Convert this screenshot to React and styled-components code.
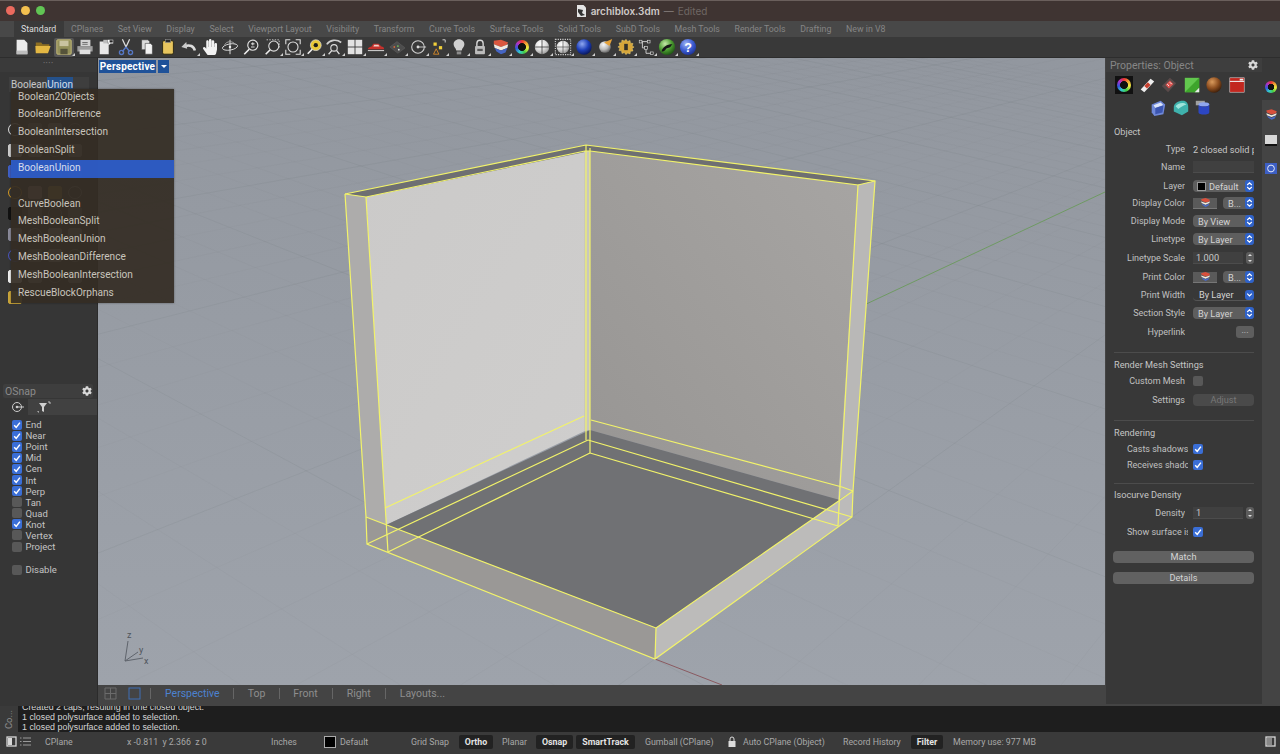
import React from 'react'
import styled, { createGlobalStyle } from 'styled-components'
import { FaCog, FaHandPaper } from 'react-icons/fa'

const GlobalStyle = createGlobalStyle`
    html, body {
        margin: 0;
        padding: 0;
        background: #2a2a2a;
    }
    * {
        box-sizing: border-box;
    }
`

const TABS = ['Standard', 'CPlanes', 'Set View', 'Display', 'Select', 'Viewport Layout', 'Visibility', 'Transform', 'Curve Tools', 'Surface Tools', 'Solid Tools', 'SubD Tools', 'Mesh Tools', 'Render Tools', 'Drafting', 'New in V8']

const MENU = ['Boolean2Objects', 'BooleanDifference', 'BooleanIntersection', 'BooleanSplit', 'BooleanUnion', '', 'CurveBoolean', 'MeshBooleanSplit', 'MeshBooleanUnion', 'MeshBooleanDifference', 'MeshBooleanIntersection', 'RescueBlockOrphans']

const SNAPS = [['End', 1], ['Near', 1], ['Point', 1], ['Mid', 1], ['Cen', 1], ['Int', 1], ['Perp', 1], ['Tan', 0], ['Quad', 0], ['Knot', 1], ['Vertex', 0], ['Project', 0]]

function CheckBox({ on }) {
    return (
        <Check $on={on}>
            {on && (
                <svg width="10" height="10" viewBox="0 0 10 10">
                    <path d="M2.2 5.2 4.2 7.4 7.9 2.6" fill="none" stroke="#fff" strokeWidth="1.5" />
                </svg>
            )}
        </Check>
    )
}

function Stepper({ square }) {
    return (
        <StepBlue $square={square}>
            <svg width="7" height="10" viewBox="0 0 7 10">
                {!square && <path d="M1.2 4 3.5 1.8 5.8 4" fill="none" stroke="#fff" strokeWidth="1.1" />}
                <path d={square ? 'M1.2 3.6 3.5 6 5.8 3.6' : 'M1.2 6 3.5 8.2 5.8 6'} fill="none" stroke="#fff" strokeWidth="1.1" />
            </svg>
        </StepBlue>
    )
}

function LayerGlyph({ size = 16 }) {
    return (
        <svg width={size} height={size} viewBox="0 0 20 20">
            <path d="M2 4 10 2l8 3-1 3-7 2-7-3z" fill="#d8503c" />
            <path d="M2 8l8 3 8-3-1 3-7 3-7-3z" fill="#efe9e0" />
            <path d="M3 12l7 3 7-3-2 4-5 2-5-3z" fill="#4a69c2" />
        </svg>
    )
}

function Sym({ children, size = 20, fly }) {
    return (
        <SymBox $size={size} $fly={fly}>
            <svg width={size} height={size} viewBox="0 0 20 20">{children}</svg>
        </SymBox>
    )
}

function Ball({ id, a, b, c, r = 8 }) {
    return (
        <>
            <defs>
                <radialGradient id={id} cx="38%" cy="30%" r="75%">
                    <stop offset="0%" stopColor={a} />
                    <stop offset="55%" stopColor={b} />
                    <stop offset="100%" stopColor={c} />
                </radialGradient>
            </defs>
            <circle cx="10" cy="10" r={r} fill={`url(#${id})`} />
        </>
    )
}

function LayerStack() {
    return (
        <>
            <path d="M2 3 10 2l8 3-2 3-6 2-8-3z" fill="#d9573f" />
            <path d="M2 7l8 3 8-3-1 4-7 3-7-3z" fill="#efe9e0" />
            <path d="M3 11l7 3 7-3-2 5-5 2-5-3z" fill="#4565c4" />
        </>
    )
}

const TOOLBAR = [
    { g: <><path d="M4 2h8.5L16 5.5V18H4z" fill="#ececec" /><path d="M4 14h12v4H4z" fill="#bdbdbd" /></> },
    { g: <><path d="M2 5h6l1.5 2H17v3H2z" fill="#8e6f22" /><path d="M1.5 9H15l3.5 0-3 8H2z" fill="#e3b743" /></> },
    { fly: 1, bg: 1, g: <><rect x="2" y="2" width="16" height="16" rx="1" fill="#93905a" stroke="#c9c07a" /><rect x="5" y="3" width="10" height="6" fill="#c9c3a0" /><rect x="6" y="12" width="8" height="6" fill="#55533a" /></> },
    { g: <><rect x="5" y="2" width="11" height="7" fill="#d4d4d4" /><path d="M1.5 9h17v6h-17z" fill="#9e9e9e" /><rect x="4" y="13" width="12" height="5" fill="#e0e0e0" /><path d="M7 5h6M7 7h6" stroke="#666" /></> },
    { g: <><path d="M3 4h7l3 3v11H3z" fill="#e8e8e8" /><path d="M7 2h5v4H7z" fill="#bdbdbd" /><path d="M12 2h6v4h-3l-2 2z" fill="#fff" /><path d="M14 2.5h3.5V5h-3.5z" fill="#222" /></> },
    { g: <><path d="M6 1.5 10 10l4-8.5" fill="none" stroke="#dedede" strokeWidth="1.4" /><path d="M10 10 6 15M10 10l4 5" stroke="#5577c4" strokeWidth="1.6" /><circle cx="5" cy="16" r="2.3" fill="none" stroke="#5577c4" strokeWidth="1.5" /><circle cx="15" cy="16" r="2.3" fill="none" stroke="#5577c4" strokeWidth="1.5" /></> },
    { g: <><path d="M4 2h7l2 2v9H4z" fill="#dcdcdc" stroke="#333" strokeWidth=".6" /><path d="M8 6h6l2 2v10H8z" fill="#f2f2f2" stroke="#333" strokeWidth=".6" /></> },
    { g: <><rect x="4" y="3" width="12" height="15" rx="1.5" fill="#e7c55e" stroke="#26220f" /><rect x="7" y="1.5" width="6" height="3.5" fill="#2a2a2a" stroke="#999" strokeWidth=".6" /></> },
    { fly: 1, g: <><path d="M16.5 14C15.5 9 11 7 5.5 9" fill="none" stroke="#dcdcdc" strokeWidth="2.8" /><path d="M7 4.5 1.5 10 8 12z" fill="#c9c9c9" /></> },
    { hand: 1 },
    { g: <><ellipse cx="10" cy="10" rx="8.5" ry="3.4" fill="none" stroke="#dcdcdc" transform="rotate(-10 10 10)" /><path d="M10 2v16" stroke="#eee" /><path d="M4 7.5c2-4 9-5 12 0" fill="none" stroke="#aaa" /><circle cx="10" cy="10" r="1.4" fill="#eee" /></> },
    { g: <><circle cx="12" cy="8" r="5.6" fill="#333" stroke="#dedede" strokeWidth="1.3" /><path d="M8 12.5 2.5 18" stroke="#eee" strokeWidth="1.8" /><path d="M10 6.5h4M12 4.8v3.4M10 10h4" stroke="#eee" /></> },
    { g: <><circle cx="12" cy="9" r="5.6" fill="#333" stroke="#dedede" strokeWidth="1.2" /><path d="M8 13 3 18" stroke="#eee" strokeWidth="1.8" /><path d="M4 2h14v9" fill="none" stroke="#cfcfcf" strokeDasharray="1.6 1.4" /></>, fly: 1 },
    { fly: 1, g: <><circle cx="10" cy="10" r="5.6" fill="#333" stroke="#dedede" strokeWidth="1.2" /><path d="M2 7V2h5M13 2h5v5M2 13v5h5M13 18h5v-5" fill="none" stroke="#dedede" strokeWidth="1.2" /></> },
    { fly: 1, g: <><circle cx="12" cy="8" r="6" fill="#e8c838" stroke="#ddd" strokeWidth=".8" /><circle cx="12" cy="8" r="2.4" fill="#1c1c1c" /><path d="M8 12.5 3 17.5" stroke="#eee" strokeWidth="1.9" /></> },
    { fly: 1, g: <><path d="M2 7c3-5 11-6 16-2" fill="none" stroke="#cfcfcf" strokeWidth="1.8" /><circle cx="10" cy="11" r="3.6" fill="none" stroke="#ddd" strokeWidth="1.2" /><path d="M7.5 14 4 18M13 14l3 4" stroke="#ddd" strokeWidth="1.5" /></> },
    { fly: 1, g: <><rect x="2" y="2" width="7.5" height="7.5" fill="#e2e2e2" /><rect x="10.5" y="2" width="7.5" height="7.5" fill="#e2e2e2" /><rect x="2" y="10.5" width="7.5" height="7.5" fill="#e2e2e2" /><rect x="10.5" y="10.5" width="7.5" height="7.5" fill="#e2e2e2" /></> },
    { fly: 1, g: <><path d="M1 12.5c0-2 3-2.5 4-3l2-3h6l3 3c2 .4 3 1 3 3z" fill="#c5312c" /><path d="M8 7.5h4.5l1.5 2H7z" fill="#f0d0c8" /><path d="M1 14h18" stroke="#e8e8e8" /></> },
    { fly: 1, g: <><path d="M10 4 19 11l-8 6-9-7z" fill="#4d4d4d" stroke="#666" strokeWidth=".5" /><circle cx="7" cy="10" r="1" fill="#d46a3a" /><circle cx="11" cy="9" r="1" fill="#6fbf5b" /><circle cx="12" cy="13" r="1" fill="#e7e7e7" /></> },
    { fly: 1, g: <><circle cx="10" cy="10" r="7" fill="none" stroke="#d2d2d2" strokeWidth="1.2" /><circle cx="10" cy="10" r="1.6" fill="#ddd" /><path d="M10 10h9" stroke="#d2d2d2" /></> },
    { fly: 1, g: <><path d="M15 2h3v3" fill="none" stroke="#ddd" /><rect x="5" y="5" width="3.6" height="3.6" fill="#f0cf3a" /><rect x="11" y="9" width="3.6" height="3.6" fill="#f0cf3a" /><path d="M5 18h6l-3-6z" fill="none" stroke="#d88a28" /></> },
    { fly: 1, g: <><path d="M10 1.5c3.5 0 6 2.6 6 5.5 0 3-2.6 4-3 7H7C6.6 11 4 10 4 7c0-2.900 2.500-5.500 6-5.500z" fill="#cfcfcf" /><rect x="7.5" y="15" width="5" height="3.2" fill="#8c8c8c" /></> },
    { fly: 1, g: <><path d="M6.500 9V6a3.500 3.500 0 0 1 7 0v3" fill="none" stroke="#d8d8d8" strokeWidth="1.5" /><rect x="4.5" y="9" width="11" height="9" rx="1" fill="#bcbcbc" /><rect x="7" y="12" width="6" height="2.5" fill="#555" /></> },
    { fly: 1, g: <LayerStack /> },
    { fly: 1, wheel: 1 },
    { fly: 1, g: <><Ball id="tbWhite" a="#fff" b="#dcdcdc" c="#999" /><path d="M2 10h16M10 2v16" stroke="#2a2a2a" strokeWidth=".8" /></> },
    { fly: 1, g: <><rect x="1.5" y="1.5" width="17" height="17" fill="none" stroke="#d5d5d5" strokeWidth="1.2" strokeDasharray="1.3 1.3" /><Ball id="tbMesh" a="#fff" b="#d8d8d8" c="#8f8f8f" r="7" /><path d="M3 10h14M10 3v14" stroke="#444" strokeWidth=".7" /></> },
    { fly: 1, g: <Ball id="tbBlue" a="#8fa8f0" b="#1e3fb8" c="#071456" r="8.5" /> },
    { fly: 1, g: <><Ball id="tbSoft" a="#f8f8f8" b="#bdbdbd" c="#5a5a5a" r="6.5" /><path d="M18 1 15 9 9 5z" fill="#e5a23a" /></> },
    { fly: 1, g: <><path d="M10 1.5l1.800 2.300 2.700-1 .4 2.900 2.900.4-1 2.700L19 10l-2.200 1.700 1 2.700-2.900.4-.4 2.900-2.700-1L10 18.500l-1.800-2.300-2.700 1-.4-2.900-2.900-.4 1-2.700L1 10l2.200-1.700-1-2.700 2.900-.4.4-2.900 2.700 1z" fill="#d7a63a" stroke="#f2d87c" strokeWidth=".5" /><rect x="8" y="6.5" width="4" height="7" fill="#33302a" /></> },
    { fly: 1, g: <><path d="M4 4h8M6 4v7h4M10 11v6h7" fill="none" stroke="#d5d5d5" /><rect x="2.5" y="2.5" width="3" height="3" fill="#333" stroke="#ddd" strokeWidth=".7" /><rect x="11.5" y="2.5" width="3" height="3" fill="#333" stroke="#ddd" strokeWidth=".7" /><rect x="8.5" y="9.5" width="3" height="3" fill="#333" stroke="#ddd" strokeWidth=".7" /><rect x="15" y="15.5" width="3" height="3" fill="#333" stroke="#ddd" strokeWidth=".7" /></> },
    { fly: 1, g: <><Ball id="tbGreen" a="#c5e8a8" b="#4a9a30" c="#1b4f12" r="9" /><path d="M4 15c1-5 6-8 12-8-2 2-2 4-5 4s-2 4-7 4z" fill="#161616" /></> },
    { fly: 1, g: <><Ball id="tbHelp" a="#9fb4f4" b="#3f5fd4" c="#1b2f90" r="9" /><text x="10" y="15" textAnchor="middle" fontSize="14" fontWeight="700" fontFamily="Liberation Sans, sans-serif" fill="#fff">?</text></> },
]

const PROP_ICONS = [
    { wheel: 1, tile: 1 },
    { g: <><path d="M3 15 14 3l4 3L7 18z" fill="#eee" /><path d="M7 11l4-4 3 3-4 4z" fill="#c8402f" /></> },
    { g: <><path d="M2 11 11 2l7 6-9 10z" fill="#5a4a4a" /><path d="M6 10l5-5 4 4-5 5z" fill="#d9534f" /><path d="M8 9l2 2M11 7l2 2" stroke="#fff" /></> },
    { g: <><rect x="2" y="2" width="16" height="16" fill="#62c84e" /><path d="M2 18 18 2v16z" fill="#3ea52c" /><path d="M13 18l5-5v5z" fill="#e8e8e8" /></> },
    { g: <Ball id="pBrown" a="#d99a5c" b="#8e4f20" c="#3a1c08" r="8.5" /> },
    { g: <><rect x="2" y="2" width="16" height="16" fill="#c2271f" stroke="#dddddd" strokeWidth=".6" /><path d="M2 6h16" stroke="#eee" strokeWidth="1.2" /><path d="M13 3h4v2h-4z" fill="#eee" /></> },
    { g: <><path d="M3 6 13 2l5 4-2 11-10 2-3-4z" fill="#6f88d8" /><path d="M5 7l8-3 3 3-9 3z" fill="#dbe4f9" /><path d="M7 10l9-3-1 8-8 2z" fill="#3b55b0" /></> },
    { g: <><path d="M2 9c0-4 5-7 10-7 4 0 6 3 6 7v5l-7 4-9-4z" fill="#3fb2ad" /><path d="M4 8c2-3 8-5 12-2-3 1-7 3-9 5z" fill="#9fe4dc" /></> },
    { g: <><rect x="2" y="2" width="10" height="5" fill="#a0a0a0" /><ellipse cx="11" cy="6" rx="6" ry="2.4" fill="#8fa6ee" /><path d="M5 6v9c0 3 12 3 12 0V6c0 3-12 3-12 0z" fill="#2c46c2" /></> },
]

const PALETTE = [
    ['#ddd', '#777', '#888', '#777'],
    ['#ccc', '#888', '#777', '#888'],
    ['#3f5fc4', '#b8b8ff', '#88a0e8', '#99b'],
    ['#d59a24', '#a88', '#a58a40', '#888'],
    ['#111', '#777', '#888', '#777'],
    ['#8a8a9a', '#999', '#aaa', '#888'],
    ['#4a55c0', '#777', '#999', '#888'],
    ['#eee', '#888', '#777', '#888'],
    ['#c9a53a'],
]

// grid lines on the ground plane: walk along the edge towards one vanishing point, draw from the other
function makeFan(along, from, w) {
    const lines = []
    for (let t = -14; t <= 44; t++) {
        const s = t * w
        const px = (655 + along[0] * s) / (1 + s)
        const py = (659 + along[1] * s) / (1 + s)
        lines.push({ x1: from[0], y1: from[1], x2: px + (px - from[0]) * 3, y2: py + (py - from[1]) * 3, major: t % 5 === 0 })
    }
    return lines
}

const VP_A = [-1210, -347]
const VP_B = [1656, -62]
const GRID = [...makeFan(VP_B, VP_A, 0.061), ...makeFan(VP_A, VP_B, 0.046)]

const Y = '#f2f36a'

function Scene() {
    return (
        <SceneSvg viewBox="98 58 1007 627">
            <defs>
                <linearGradient id="wallL" x1="0" y1="0" x2="1" y2="1">
                    <stop offset="0%" stopColor="#cbcac9" />
                    <stop offset="100%" stopColor="#cfcecd" />
                </linearGradient>
                <linearGradient id="wallR" x1="1" y1="0" x2="0" y2="1">
                    <stop offset="0%" stopColor="#a7a5a3" />
                    <stop offset="100%" stopColor="#979593" />
                </linearGradient>
            </defs>
            {GRID.map((l, i) => (
                <line key={i} x1={l.x1} y1={l.y1} x2={l.x2} y2={l.y2} stroke="#5a6068" strokeOpacity={l.major ? 0.09 : 0.04} />
            ))}
            <line x1="862" y1="306" x2="1105" y2="192" stroke="#6f9a63" strokeWidth="1" />
            <line x1="655" y1="659" x2="722" y2="685" stroke="#8a5a60" strokeWidth="1" />

            <polygon points="366,197 587,151 587,430 386,525" fill="url(#wallL)" />
            <polygon points="590,151 858,185 840,500 590,430" fill="url(#wallR)" />
            <polygon points="386,525 590,430 840,500 656,628" fill="#707174" />
            <polygon points="345,194 586,145 875,181 858,185 590,151 366,197" fill="#6e6f72" />
            <polygon points="345,194 366,197 386,525 366,517" fill="#adacab" />
            <polygon points="858,185 875,181 853,491 838,500" fill="#b9b8b7" />
            <polygon points="584,151 590,151 590,430 584,431" fill="#c9c7bd" />
            <polygon points="366,517 656,628 655,659 367,544" fill="#9a9896" />
            <polygon points="656,628 853,491 852,517 655,659" fill="#bcbbba" />

            <g fill="none" stroke={Y} strokeWidth="1.2">
                <polyline points="345,194 586,145 875,181 853,491 852,517 655,659 367,544 366,517 345,194" />
                <polyline points="366,197 585,151 590,151 858,185 840,487" />
                <line x1="345" y1="194" x2="366" y2="197" />
                <line x1="875" y1="181" x2="858" y2="185" />
                <line x1="586" y1="145" x2="586" y2="440" />
                <line x1="590" y1="148" x2="590" y2="453" />
                <line x1="366" y1="197" x2="388" y2="552" />
                <line x1="366" y1="517" x2="656" y2="628" />
                <line x1="656" y1="628" x2="655" y2="659" />
                <line x1="656" y1="628" x2="853" y2="491" />
                <line x1="385" y1="508" x2="584" y2="416" />
                <line x1="591" y1="420" x2="842" y2="487" />
                <line x1="842" y1="487" x2="853" y2="491" />
                <line x1="367" y1="544" x2="588" y2="440" />
                <line x1="388" y1="552" x2="590" y2="453" />
                <line x1="588" y1="440" x2="852" y2="517" />
                <line x1="590" y1="453" x2="838" y2="526" />
                <line x1="840" y1="487" x2="838" y2="526" />
            </g>

            <g stroke="#5f646c" strokeWidth="1" fill="none">
                <line x1="125" y1="661" x2="128" y2="641" />
                <line x1="125" y1="661" x2="138" y2="652" />
                <line x1="125" y1="661" x2="143" y2="658" />
            </g>
            <AxisText x="127" y="638">z</AxisText>
            <AxisText x="139" y="653">y</AxisText>
            <AxisText x="144" y="664">x</AxisText>
        </SceneSvg>
    )
}

function ToolIcon({ item, size }) {
    if (item.wheel) {
        return (
            <SymBox $size={size} $fly={item.fly}>
                <WheelTile $tile={item.tile}><Wheel $size={size - 4} /></WheelTile>
            </SymBox>
        )
    }
    if (item.hand) {
        return (
            <SymBox $size={size}>
                <FaHandPaper size={size - 2} color="#f2f2f2" />
            </SymBox>
        )
    }
    return <Sym size={size} fly={item.fly}>{item.g}</Sym>
}

function PropRow({ label, mt, clip, children }) {
    return (
        <Row $mt={mt}>
            <RowLabel $clip={clip}>{label}</RowLabel>
            <RowControl>{children}</RowControl>
        </Row>
    )
}

function Select({ children, square }) {
    return (
        <SelectBox $square={square}>
            <SelectText>{children}</SelectText>
            <Stepper square={square} />
        </SelectBox>
    )
}

function ColorRow({ label, mt }) {
    return (
        <PropRow label={label} mt={mt}>
            <Swatch><LayerGlyph size={11} /></Swatch>
            <ShortSelect>
                <SelectText>B...</SelectText>
                <Stepper />
            </ShortSelect>
        </PropRow>
    )
}

function App() {
    return (
        <Root>
            <GlobalStyle />
            <TitleBar>
                <Lights>
                    <Light $c="#ec6a5e" />
                    <Light $c="#f4bf4f" />
                    <Light $c="#61c554" />
                </Lights>
                <TitleDoc>
                    <svg width="9" height="12" viewBox="0 0 9 12">
                        <path d="M0 0h6.500L9 2.500V12H0z" fill="#e4e4e4" />
                        <path d="M1 4l5 1-1 3 3 2-4 1-3-4z" fill="#333" />
                    </svg>
                    <b>archiblox.3dm</b>
                    <span>—</span>
                    <em>Edited</em>
                </TitleDoc>
            </TitleBar>

            <TabBar>
                {TABS.map((t, i) => (
                    <Tab key={t} $active={i === 0}>{t}</Tab>
                ))}
            </TabBar>

            <ToolBar>
                <Grip />
                {TOOLBAR.map((item, i) => (
                    <ToolSlot key={i} $bg={item.bg}>
                        <ToolIcon item={item} size={18} />
                    </ToolSlot>
                ))}
            </ToolBar>

            <Main>
                <LeftPanel>
                    <PanelGrip>••••</PanelGrip>
                    <CommandInput>Boolean<Picked>Union</Picked></CommandInput>
                    <Palette>
                        {PALETTE.map((row, r) => (
                            <PaletteRow key={r}>
                                {row.map((c, i) => (
                                    <PaletteCell key={i} $c={c} $round={(r + i) % 3 === 0} />
                                ))}
                            </PaletteRow>
                        ))}
                    </Palette>
                    <OSnapHead>
                        OSnap
                        <FaCog size={10} color="#d8d8d8" />
                    </OSnapHead>
                    <OSnapTabs>
                        <OSnapTab $active>
                            <svg width="14" height="12" viewBox="0 0 14 12">
                                <circle cx="6" cy="6" r="4.5" fill="none" stroke="#ccc" />
                                <circle cx="6" cy="6" r="1.3" fill="#ccc" />
                                <path d="M6 6h7" stroke="#ccc" />
                            </svg>
                        </OSnapTab>
                        <OSnapTab>
                            <svg width="14" height="12" viewBox="0 0 14 12">
                                <path d="M2 2h8L7 6v5L5 10V6z" fill="#cfcfcf" />
                                <path d="M11 1h2v2M1 10v1h1" fill="none" stroke="#ddd" strokeWidth=".8" />
                            </svg>
                        </OSnapTab>
                    </OSnapTabs>
                    <SnapList>
                        {SNAPS.map(([name, on]) => (
                            <SnapRow key={name}>
                                <CheckBox on={!!on} />
                                {name}
                            </SnapRow>
                        ))}
                        <SnapRow $mt={12}>
                            <CheckBox on={false} />
                            Disable
                        </SnapRow>
                    </SnapList>
                </LeftPanel>

                <Center>
                    <Viewport>
                        <Scene />
                        <ViewLabel>
                            <ViewName>Perspective</ViewName>
                            <ViewArrow />
                        </ViewLabel>
                    </Viewport>
                    <ViewTabs>
                        <ViewTabIcon>
                            <svg width="13" height="13" viewBox="0 0 13 13">
                                <path d="M1 1h11v11H1zM6.500 1v11M1 6.500h11" fill="none" stroke="#6b6b6b" />
                            </svg>
                        </ViewTabIcon>
                        <ViewTabIcon $ml={11}>
                            <svg width="13" height="13" viewBox="0 0 13 13">
                                <rect x="1" y="1" width="11" height="11" fill="none" stroke="#3f6fb5" />
                            </svg>
                        </ViewTabIcon>
                        <ViewSep $ml={9} />
                        <ViewTab $active $ml={14}>Perspective</ViewTab>
                        <ViewSep $ml={13} />
                        <ViewTab $ml={14}>Top</ViewTab>
                        <ViewSep $ml={14} />
                        <ViewTab $ml={13}>Front</ViewTab>
                        <ViewSep $ml={14} />
                        <ViewTab $ml={14}>Right</ViewTab>
                        <ViewSep $ml={14} />
                        <ViewTab $ml={14}>Layouts...</ViewTab>
                    </ViewTabs>
                </Center>

                <RightPanel>
                    <Props>
                        <PropsHead>
                            Properties: Object
                            <FaCog size={10} color="#d8d8d8" />
                        </PropsHead>
                        <PropIcons>
                            {PROP_ICONS.map((item, i) => (
                                <PropIconSlot key={i}>
                                    <ToolIcon item={item} size={18} />
                                </PropIconSlot>
                            ))}
                        </PropIcons>
                        <SectionTitle $mt={5}>Object</SectionTitle>
                        <PropRow label="Type" mt={1}><PlainValue>2 closed solid p</PlainValue></PropRow>
                        <PropRow label="Name" mt={2}><TextField /></PropRow>
                        <PropRow label="Layer" mt={3}>
                            <SelectBox>
                                <Black />
                                <SelectText $tight>Default</SelectText>
                                <Stepper />
                            </SelectBox>
                        </PropRow>
                        <ColorRow label="Display Color" mt={1} />
                        <PropRow label="Display Mode" mt={2}><Select>By View</Select></PropRow>
                        <PropRow label="Linetype" mt={2}><Select>By Layer</Select></PropRow>
                        <PropRow label="Linetype Scale" mt={3}>
                            <TextField $short>1.000</TextField>
                            <SpinBox />
                        </PropRow>
                        <ColorRow label="Print Color" mt={3} />
                        <PropRow label="Print Width" mt={2}><Select square>By Layer</Select></PropRow>
                        <PropRow label="Section Style" mt={2}><Select>By Layer</Select></PropRow>
                        <PropRow label="Hyperlink" mt={3}><DotsButton>...</DotsButton></PropRow>

                        <Divider $mt={12} />
                        <SectionTitle $mt={4}>Render Mesh Settings</SectionTitle>
                        <PropRow label="Custom Mesh" mt={0}><CheckBox on={false} /></PropRow>
                        <PropRow label="Settings" mt={3}><AdjustButton>Adjust</AdjustButton></PropRow>

                        <Divider $mt={12} />
                        <SectionTitle $mt={4}>Rendering</SectionTitle>
                        <PropRow label="Casts shadows" mt={0} clip><CheckBox on /></PropRow>
                        <PropRow label="Receives shadows" mt={0} clip><CheckBox on /></PropRow>

                        <Divider $mt={10} />
                        <SectionTitle $mt={3}>Isocurve Density</SectionTitle>
                        <PropRow label="Density" mt={2}>
                            <TextField $short>1</TextField>
                            <SpinBox />
                        </PropRow>
                        <PropRow label="Show surface isocurves" mt={3} clip><CheckBox on /></PropRow>
                        <WideButton $mt={11}>Match</WideButton>
                        <WideButton $mt={9}>Details</WideButton>
                    </Props>
                    <SideTabs>
                        <SideTab $active><Wheel $size={12} /></SideTab>
                        <SideTab $ml={13}><LayerGlyph size={13} /></SideTab>
                        <SideTab $ml={12}>
                            <svg width="14" height="13" viewBox="0 0 14 13">
                                <rect x="1" y="1" width="12" height="9" fill="#d8d8d8" />
                                <path d="M1 10h12v2H1z" fill="#111" />
                            </svg>
                        </SideTab>
                        <SideTab $ml={14}>
                            <svg width="14" height="13" viewBox="0 0 14 13">
                                <rect x="1" y="1" width="12" height="11" fill="#3d5fc4" />
                                <circle cx="7" cy="6.500" r="3.400" fill="none" stroke="#e4e9f8" />
                            </svg>
                        </SideTab>
                    </SideTabs>
                </RightPanel>
            </Main>

            <CommandArea>
                <CommandTag><span>Co...</span></CommandTag>
                <CommandLog>
                    <div>Created 2 caps, resulting in one closed object.</div>
                    <div>1 closed polysurface added to selection.</div>
                    <div>1 closed polysurface added to selection.</div>
                </CommandLog>
            </CommandArea>

            <StatusBar>
                <StatusIcon $ml={6}>
                    <svg width="11" height="11" viewBox="0 0 11 11">
                        <rect x="1" y="1" width="9" height="9" fill="none" stroke="#d8d8d8" strokeWidth="1.3" />
                        <rect x="2" y="2" width="4" height="7" fill="#d8d8d8" />
                    </svg>
                </StatusIcon>
                <StatusIcon $ml={3}>
                    <svg width="11" height="11" viewBox="0 0 11 11">
                        <path d="M3 2h8M3 5.500h8M3 9h8M0 2h1.500M0 5.500h1.500M0 9h1.500" stroke="#9a9a9a" />
                    </svg>
                </StatusIcon>
                <StatusText $at={45}>CPlane</StatusText>
                <StatusText $at={127}>x -0.811&nbsp; y 2.366&nbsp; z 0</StatusText>
                <StatusText $at={271}>Inches</StatusText>
                <StatusSwatch $at={324} />
                <StatusText $at={340}>Default</StatusText>
                <StatusText $at={411}>Grid Snap</StatusText>
                <StatusToggle $at={459} $w={34}>Ortho</StatusToggle>
                <StatusText $at={502}>Planar</StatusText>
                <StatusToggle $at={536} $w={37}>Osnap</StatusToggle>
                <StatusToggle $at={576} $w={59}>SmartTrack</StatusToggle>
                <StatusText $at={645}>Gumball (CPlane)</StatusText>
                <StatusLock $at={728}>
                    <svg width="8" height="11" viewBox="0 0 8 11">
                        <path d="M2 5V3a2 2 0 0 1 4 0v2" fill="none" stroke="#ddd" />
                        <rect x=".5" y="5" width="7" height="6" fill="#ddd" />
                    </svg>
                </StatusLock>
                <StatusText $at={743}>Auto CPlane (Object)</StatusText>
                <StatusText $at={843}>Record History</StatusText>
                <StatusToggle $at={911} $w={32}>Filter</StatusToggle>
                <StatusText $at={953}>Memory use: 977 MB</StatusText>
                <StatusEnd>
                    <svg width="11" height="11" viewBox="0 0 11 11">
                        <rect x="1" y="1" width="9" height="9" fill="none" stroke="#d8d8d8" strokeWidth="1.3" />
                        <rect x="2" y="2" width="5" height="7" fill="#888" />
                    </svg>
                </StatusEnd>
            </StatusBar>

            <Menu>
                {MENU.map((m, i) => (
                    <MenuItem key={i} $active={m === 'BooleanUnion'}>{m}</MenuItem>
                ))}
            </Menu>
        </Root>
    )
}

export default App

const FONT = `Roboto, "Liberation Sans", sans-serif`

const Root = styled.div`
    position: relative;
    width: 1280px;
    height: 754px;
    overflow: hidden;
    display: flex;
    flex-direction: column;
    font-family: ${FONT};
    font-size: 8.8px;
    color: #bdbdbd;
    background: #3a3a3a;
`
const TitleBar = styled.div`
    position: relative;
    height: 21px;
    flex: none;
    display: flex;
    align-items: center;
    justify-content: center;
    padding-left: 4px;
    background: #3f3432;
    border-top: 1px solid #6a5f5c;
`
const Lights = styled.div`
    position: absolute;
    left: 6px;
    top: 5px;
    display: flex;
    gap: 6px;
`
const Light = styled.span`
    width: 9px;
    height: 9px;
    border-radius: 50%;
    background: ${(p) => p.$c};
`
const TitleDoc = styled.div`
    display: flex;
    align-items: center;
    gap: 4px;
    font-family: Inter, sans-serif;
    font-size: 10px;
    color: #6f6764;
    svg {
        margin-right: 1px;
    }
    b {
        font-weight: 600;
        color: #cfcac8;
    }
    span {
        color: #8a8280;
    }
    em {
        font-style: normal;
    }
`
const TabBar = styled.div`
    height: 16px;
    flex: none;
    display: flex;
    align-items: center;
    padding-left: 13.7px;
    background: #484848;
`
const Tab = styled.div`
    height: 100%;
    padding: 0 7.3px;
    display: flex;
    align-items: center;
    white-space: nowrap;
    color: ${(p) => (p.$active ? '#dedede' : '#858585')};
    background: ${(p) => (p.$active ? '#3a3a3a' : 'transparent')};
`
const ToolBar = styled.div`
    height: 21px;
    flex: none;
    display: flex;
    align-items: center;
    padding-left: 6px;
    background: #393939;
    border-bottom: 1px solid #2d2d2d;
`
const Grip = styled.div`
    width: 6px;
    height: 14px;
`
const ToolSlot = styled.div`
    width: 20.8px;
    height: 19px;
    flex: none;
    display: flex;
    align-items: center;
    justify-content: center;
    background: ${(p) => (p.$bg ? '#565656' : 'transparent')};
    border-radius: 2px;
`
const SymBox = styled.span`
    position: relative;
    width: ${(p) => p.$size}px;
    height: ${(p) => p.$size}px;
    display: inline-flex;
    align-items: center;
    justify-content: center;
    &::after {
        content: '';
        display: ${(p) => (p.$fly ? 'block' : 'none')};
        position: absolute;
        right: -2px;
        bottom: 0;
        width: 0;
        height: 0;
        border-left: 3px solid transparent;
        border-bottom: 3px solid #cfcfcf;
    }
`
const WheelTile = styled.span`
    display: inline-flex;
    align-items: center;
    justify-content: center;
    padding: 2px;
    background: ${(p) => (p.$tile ? '#111' : 'transparent')};
`
const Wheel = styled.span`
    display: block;
    width: ${(p) => p.$size}px;
    height: ${(p) => p.$size}px;
    border-radius: 50%;
    background: radial-gradient(circle, #111 0 38%, transparent 40%),
        conic-gradient(#e33, #ea3, #ee4, #4c4, #3cc, #35d, #a3c, #e33);
`
const Main = styled.div`
    flex: 1;
    min-height: 0;
    display: flex;
`
const LeftPanel = styled.div`
    width: 98px;
    flex: none;
    display: flex;
    flex-direction: column;
    padding-left: 2px;
    background: #363636;
    border-right: 1px solid #2b2b2b;
`
const PanelGrip = styled.div`
    height: 14px;
    text-align: center;
    font-size: 5px;
    line-height: 10px;
    letter-spacing: 1px;
    color: #7a7a7a;
    background: #3a3a3a;
    margin-left: -2px;
`
const CommandInput = styled.div`
    height: 15px;
    margin: 5px 8px 0 7px;
    padding-left: 2px;
    line-height: 15px;
    font-size: 10px;
    color: #c8c8c8;
    background: #3e3e3e;
`
const Picked = styled.span`
    display: inline-block;
    background: #24518b;
    color: #d5deea;
`
const Palette = styled.div`
    height: 291px;
    padding: 31px 0 0 6px;
    display: flex;
    flex-direction: column;
    gap: 8px;
`
const PaletteRow = styled.div`
    display: flex;
    gap: 6px;
`
const PaletteCell = styled.span`
    width: 14px;
    height: 13px;
    border-radius: ${(p) => (p.$round ? '50%' : '2px')};
    border: 1.5px solid ${(p) => p.$c};
    background: ${(p) => (p.$round ? 'transparent' : p.$c)};
`
const OSnapHead = styled.div`
    height: 14px;
    margin: 1px 4px 0 1px;
    padding: 0 1px 0 2px;
    display: flex;
    align-items: center;
    justify-content: space-between;
    font-size: 10.5px;
    color: #8b8b8b;
    background: #3e3e3e;
    border-radius: 2px;
`
const OSnapTabs = styled.div`
    height: 16px;
    margin-top: 1px;
    display: flex;
    padding-left: 6px;
    background: linear-gradient(to right, #363636 26px, #414141 26px);
`
const OSnapTab = styled.div`
    width: 20px;
    display: flex;
    align-items: center;
    justify-content: center;
    margin-right: 6px;
`
const SnapList = styled.div`
    padding: 4px 0 0 10px;
`
const SnapRow = styled.div`
    height: 11.1px;
    margin-top: ${(p) => p.$mt || 0}px;
    display: flex;
    align-items: center;
    gap: 3.5px;
    font-size: 9.5px;
    color: #c4c4c4;
`
const Check = styled.span`
    width: 10px;
    height: 10px;
    flex: none;
    display: inline-flex;
    border-radius: 2px;
    background: ${(p) => (p.$on ? '#3a6ed6' : '#585858')};
`
const Center = styled.div`
    flex: 1;
    min-width: 0;
    display: flex;
    flex-direction: column;
    background: #444;
`
const Viewport = styled.div`
    position: relative;
    height: 627px;
    flex: none;
    background: linear-gradient(to bottom, #92979f, #9ea3ab);
`
const SceneSvg = styled.svg`
    display: block;
    width: 100%;
    height: 100%;
`
const AxisText = styled.text`
    font-family: ${FONT};
    font-size: 9px;
    fill: #50555c;
`
const ViewLabel = styled.div`
    position: absolute;
    top: 2px;
    left: 1px;
    display: flex;
    gap: 2px;
`
const ViewName = styled.div`
    width: 57px;
    height: 13px;
    text-align: center;
    line-height: 13px;
    font-size: 10px;
    font-weight: 700;
    letter-spacing: 0.2px;
    color: #fff;
    background: #1f5299;
`
const ViewArrow = styled.div`
    width: 11px;
    height: 13px;
    background: #1f5299;
    position: relative;
    &::after {
        content: '';
        position: absolute;
        left: 2.5px;
        top: 5px;
        border-left: 3px solid transparent;
        border-right: 3px solid transparent;
        border-top: 3px solid #fff;
    }
`
const ViewTabs = styled.div`
    flex: 1;
    display: flex;
    align-items: center;
    padding: 0 0 5px 6px;
    font-size: 10.5px;
`
const ViewTabIcon = styled.span`
    display: inline-flex;
    margin-left: ${(p) => p.$ml || 0}px;
`
const ViewSep = styled.span`
    width: 1px;
    height: 11px;
    margin-left: ${(p) => p.$ml}px;
    background: #666;
`
const ViewTab = styled.span`
    margin-left: ${(p) => p.$ml}px;
    color: ${(p) => (p.$active ? '#4c82d0' : '#8e8e8e')};
`
const RightPanel = styled.div`
    width: 175px;
    flex: none;
    display: flex;
    background: #444;
`
const Props = styled.div`
    width: 156px;
    height: 646px;
    flex: none;
    margin-left: 1px;
    display: flex;
    flex-direction: column;
    background: #383838;
`
const PropsHead = styled.div`
    height: 14px;
    flex: none;
    padding: 0 4px;
    display: flex;
    align-items: center;
    justify-content: space-between;
    font-size: 10.5px;
    color: #868686;
    background: #3e3e3e;
`
const PropIcons = styled.div`
    width: 135px;
    height: 45px;
    margin: 2px 0 0 7px;
    display: flex;
    flex-wrap: wrap;
    justify-content: center;
    flex: none;
`
const PropIconSlot = styled.div`
    width: 22.5px;
    height: 22px;
    display: flex;
    align-items: center;
    justify-content: center;
`
const SectionTitle = styled.div`
    height: 16px;
    flex: none;
    margin-top: ${(p) => p.$mt}px;
    padding-left: 8px;
    line-height: 16px;
    font-size: 9.2px;
    color: #c4c4c4;
`
const Row = styled.div`
    height: 16px;
    flex: none;
    margin-top: ${(p) => p.$mt}px;
    display: flex;
    align-items: center;
`
const RowLabel = styled.div`
    width: ${(p) => (p.$clip ? 61 : 79)}px;
    margin-left: ${(p) => (p.$clip ? 21 : 0)}px;
    margin-right: ${(p) => (p.$clip ? 5 : 8)}px;
    flex: none;
    overflow: hidden;
    white-space: nowrap;
    text-align: right;
    font-size: 9px;
    color: #c0c0c0;
`
const RowControl = styled.div`
    width: 61px;
    display: flex;
    align-items: center;
    justify-content: space-between;
`
const PlainValue = styled.div`
    width: 61px;
    overflow: hidden;
    white-space: nowrap;
    font-size: 9.2px;
    color: #c6c6c6;
`
const TextField = styled.div`
    width: ${(p) => (p.$short ? 50 : 61)}px;
    height: 12px;
    padding-left: 3px;
    line-height: 12px;
    font-size: 9.2px;
    color: #c8c8c8;
    background: #404040;
    border-bottom: 1px solid #4c4c4c;
`
const SpinBox = styled.span`
    position: relative;
    width: 8px;
    height: 12px;
    border-radius: 3px;
    background: #5c5c5c;
    &::before,
    &::after {
        content: '';
        position: absolute;
        left: 2px;
        border-left: 2px solid transparent;
        border-right: 2px solid transparent;
    }
    &::before {
        top: 2px;
        border-bottom: 2.5px solid #ddd;
    }
    &::after {
        bottom: 2px;
        border-top: 2.5px solid #ddd;
    }
`
const SelectBox = styled.div`
    width: 61px;
    height: 12px;
    padding-left: ${(p) => (p.$square ? 6 : 5)}px;
    display: flex;
    align-items: center;
    justify-content: space-between;
    border-radius: 4px;
    background: ${(p) => (p.$square ? 'transparent' : '#5e5e5e')};
    border-bottom: ${(p) => (p.$square ? '1px solid #555' : 'none')};
`
const ShortSelect = styled.div`
    width: 31px;
    height: 12px;
    padding-left: 5px;
    display: flex;
    align-items: center;
    justify-content: space-between;
    border-radius: 4px;
    background: #5e5e5e;
`
const SelectText = styled.span`
    flex: 1;
    overflow: hidden;
    white-space: nowrap;
    font-size: 9.2px;
    color: #d4d4d4;
    padding-left: ${(p) => (p.$tight ? 3 : 0)}px;
`
const StepBlue = styled.span`
    width: 9px;
    height: ${(p) => (p.$square ? 10 : 12)}px;
    flex: none;
    display: inline-flex;
    align-items: center;
    justify-content: center;
    border-radius: 3px;
    background: #2f62c9;
`
const Black = styled.span`
    width: 9px;
    height: 9px;
    flex: none;
    margin-left: -1px;
    background: #000;
    border: 1px solid #999;
`
const Swatch = styled.span`
    width: 24px;
    height: 11px;
    display: inline-flex;
    align-items: center;
    justify-content: center;
    background: #5a5a5a;
    border-bottom: 1px solid #777;
`
const DotsButton = styled.div`
    width: 18px;
    height: 12px;
    margin-left: auto;
    text-align: center;
    line-height: 9px;
    border-radius: 3px;
    color: #ccc;
    background: #5e5e5e;
`
const AdjustButton = styled.div`
    width: 61px;
    height: 12px;
    text-align: center;
    line-height: 12px;
    font-size: 9.2px;
    border-radius: 4px;
    color: #777;
    background: #4a4a4a;
`
const Divider = styled.div`
    height: 1px;
    flex: none;
    margin: ${(p) => p.$mt}px 8px 0 8px;
    background: #4c4c4c;
`
const WideButton = styled.div`
    width: 141px;
    height: 12px;
    flex: none;
    margin: ${(p) => p.$mt}px 0 0 7px;
    text-align: center;
    line-height: 12px;
    font-size: 9.2px;
    border-radius: 4px;
    color: #d4d4d4;
    background: #616161;
`
const SideTabs = styled.div`
    flex: 1;
    display: flex;
    flex-direction: column;
    align-items: center;
    background: linear-gradient(to bottom, #383838 42px, #444 42px);
`
const SideTab = styled.div`
    height: 14px;
    display: flex;
    align-items: center;
    justify-content: center;
    margin-top: ${(p) => (p.$active ? 22 : p.$ml || 0)}px;
`
const CommandArea = styled.div`
    height: 26px;
    flex: none;
    display: flex;
    background: #1e1e1e;
`
const CommandTag = styled.div`
    width: 18px;
    flex: none;
    display: flex;
    align-items: center;
    justify-content: center;
    background: #3a3a3a;
    color: #8c8c8c;
    font-size: 9.5px;
    span {
        transform: rotate(-90deg);
        white-space: nowrap;
    }
`
const CommandLog = styled.div`
    flex: 1;
    padding-left: 4px;
    display: flex;
    flex-direction: column;
    justify-content: flex-end;
    overflow: hidden;
    font-family: "Liberation Sans", sans-serif;
    font-size: 8.9px;
    line-height: 10px;
    color: #d4d4d4;
`
const StatusBar = styled.div`
    position: relative;
    height: 22px;
    flex: none;
    display: flex;
    align-items: center;
    padding-bottom: 3px;
    background: #3a3a3a;
    font-size: 8.8px;
    color: #a8a8a8;
`
const StatusIcon = styled.span`
    display: inline-flex;
    margin-left: ${(p) => p.$ml}px;
`
const StatusText = styled.span`
    position: absolute;
    left: ${(p) => p.$at}px;
    white-space: nowrap;
`
const StatusSwatch = styled.span`
    position: absolute;
    left: ${(p) => p.$at}px;
    width: 12px;
    height: 12px;
    background: #000;
    border: 1px solid #aaa;
`
const StatusToggle = styled.span`
    position: absolute;
    left: ${(p) => p.$at}px;
    width: ${(p) => p.$w}px;
    height: 14px;
    line-height: 14px;
    text-align: center;
    font-weight: 700;
    color: #e4e4e4;
    background: #222;
    border-radius: 2px;
`
const StatusLock = styled.span`
    position: absolute;
    left: ${(p) => p.$at}px;
    display: inline-flex;
`
const StatusEnd = styled.span`
    margin-left: auto;
    margin-right: 4px;
    display: inline-flex;
`
const Menu = styled.div`
    position: absolute;
    left: 11px;
    top: 89px;
    width: 163px;
    height: 214px;
    background: rgba(52, 44, 35, 0.93);
    box-shadow: 0 0 2px rgba(0, 0, 0, 0.4);
`
const MenuItem = styled.div`
    height: 17.83px;
    padding: 0 0 3.5px 7px;
    display: flex;
    align-items: center;
    font-size: 10.1px;
    color: ${(p) => (p.$active ? '#d5dcec' : '#c8c4bc')};
    background: ${(p) => (p.$active ? 'rgba(44, 94, 208, 0.9)' : 'transparent')};
`
